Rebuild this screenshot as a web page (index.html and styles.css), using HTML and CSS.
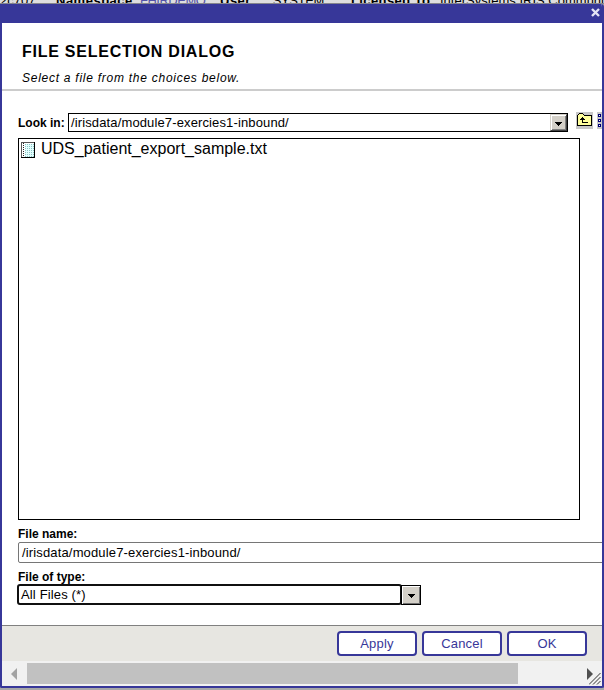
FILE: index.html
```html
<!DOCTYPE html>
<html lang="en">
<head>
<meta charset="utf-8">
<title>File Selection Dialog</title>
<link rel="stylesheet" href="styles.css">
</head>
<body>
<div class="backdrop">
  <span class="server">2c707</span><b class="ns">Namespace</b><span class="link">FHIRDEMO</span><b class="user">User</b><span class="system">_SYSTEM</span><b class="lic">Licensed To</b><span class="owner">InterSystems IRIS Community</span>
</div>
<div class="dialog">
  <div class="titlebar">
    <svg class="close" width="9" height="9" viewBox="0 0 9 9"><path d="M1 1L8 8M8 1L1 8" stroke="#e4e4f5" stroke-width="2.4"/></svg>
  </div>
  <header class="header">
    <h1>FILE SELECTION DIALOG</h1>
    <p>Select a file from the choices below.</p>
  </header>
  <main class="content">
    <div class="lookin">
      <label>Look in:</label>
      <div class="combo"><span>/irisdata/module7-exercies1-inbound/</span><div class="drop"><svg width="7" height="4" shape-rendering="crispEdges"><path d="M0 0h7v1H6v1H5v1H4v1H3V3H2V2H1V1H0z"/></svg></div></div>
      <svg class="up" width="17" height="17" shape-rendering="crispEdges">
        <path fill="#c8c8c8" d="M0 0h17v17H0z"/>
        <path fill="#000" d="M3 1h4v1h1v1h8v11H1V3h1V2h1z"/>
        <path fill="#ffff9c" d="M3 2h4v1h1v1h7v9H2V3h1z"/>
        <path fill="#000" d="M6 5h1v1h1v1h1v1H7v2h5v1H6V8H4V7h1V6h1z"/>
      </svg>
      <svg class="views" width="5" height="17" shape-rendering="crispEdges"><path fill="#c8c8c8" d="M0 0h5v17H0z"/><path fill="#000078" d="M1 2h3v3H1zM1 7h3v3H1zM1 12h3v3H1z"/><path fill="#fff" d="M2 3h1v1H2zM2 8h1v1H2zM2 13h1v1H2z"/></svg>
    </div>
    <div class="list">
      <div class="file">
        <svg width="15" height="17" shape-rendering="crispEdges">
          <defs><pattern id="dots" width="2" height="2" patternUnits="userSpaceOnUse"><path fill="#e4ffff" d="M0 0h2v2H0z"/><path fill="#8cc4c4" d="M0 0h1v1H0z"/></pattern></defs>
          <path fill="#555" d="M0 0h14v16H0z"/><path fill="#fff" d="M1 1h12v14H1z"/><path fill="url(#dots)" d="M4 2h9v13H4z"/>
          <path stroke="#222" stroke-dasharray="1 1" d="M2.5 1v14"/><path fill="#000" d="M13 0h1v16H0v-1h13z"/>
        </svg>
        <span>UDS_patient_export_sample.txt</span>
      </div>
    </div>
    <label class="name-label">File name:</label>
    <div class="name-input">/irisdata/module7-exercies1-inbound/</div>
    <label class="type-label">File of type:</label>
    <div class="type"><div class="type-input">All Files (*)</div><div class="drop type-drop"><svg width="7" height="4" shape-rendering="crispEdges"><path d="M0 0h7v1H6v1H5v1H4v1H3V3H2V2H1V1H0z"/></svg></div></div>
  </main>
  <footer class="footer">
    <button>Apply</button><button>Cancel</button><button>OK</button>
  </footer>
  <div class="scrollbar">
    <svg class="left" width="6" height="12"><path fill="#a3a3a3" d="M6 0v12L0 6z"/></svg>
    <div class="thumb"></div>
    <svg class="right" width="6" height="12"><path fill="#505050" d="M0 0v12l6-6z"/></svg>
    <svg class="grip" width="12" height="12"><path stroke="#333" d="M0 11.5L11.5 0M4 11.5L11.5 4M8 11.5L11.5 8"/></svg>
  </div>
</div>
</body>
</html>
```
FILE: styles.css
```css
* { box-sizing: border-box; }
body {
  margin: 0;
  width: 604px;
  height: 690px;
  overflow: hidden;
  background: #a8a8a8;
  font-family: "Liberation Sans", Arial, sans-serif;
  color: #000;
}
.backdrop {
  display: flex;
  height: 4px;
  overflow: hidden;
  background: #dedede;
  border-bottom: 1px solid #85858c;
  font-size: 13px;
  line-height: 14px;
  white-space: nowrap;
}
.backdrop > * { margin-top: -6px; flex: none; }
.server { width: 56px; }
.ns { width: 84px; letter-spacing: 0.5px; }
.link { width: 80px; color: #5353a8; letter-spacing: -0.5px; }
.user { width: 46px; letter-spacing: 0.5px; }
.system { width: 85px; letter-spacing: -0.4px; }
.lic { width: 89px; letter-spacing: 0.4px; }
.dialog {
  display: flex;
  flex-direction: column;
  height: 684px;
  border: 2px solid #373799;
  border-top: 0;
  border-radius: 0 3px 2px 2px;
  background: #fff;
  overflow: hidden;
}
.titlebar {
  display: flex;
  justify-content: flex-end;
  flex: none;
  height: 19px;
  padding: 4px 2px 0 0;
  background: #373799;
}
.header {
  flex: none;
  height: 68px;
  padding: 19px 20px 0;
  border-bottom: 2px solid #ccc;
}
h1 {
  margin: 0;
  font-size: 16px;
  line-height: 19px;
  letter-spacing: 0.75px;
}
.header p {
  margin: 10px 0 0;
  font-size: 12px;
  font-style: italic;
  line-height: 14px;
  letter-spacing: 0.74px;
}
.content { flex: none; height: 534px; padding: 21px 0 0 16px; }
label { display: block; font-size: 12px; font-weight: bold; line-height: 14px; }
.lookin { display: flex; height: 20px; }
.lookin label { width: 50px; padding-top: 4px; flex: none; white-space: nowrap; }
.combo {
  display: flex;
  justify-content: space-between;
  flex: none;
  width: 500px;
  height: 19px;
  margin-top: 1px;
  border: 1px solid #000;
  padding-left: 2px;
  font-size: 13px;
  line-height: 17px;
  letter-spacing: 0.13px;
}
.drop {
  display: flex;
  align-items: center;
  justify-content: center;
  width: 17px;
  height: 17px;
  padding-top: 2px;
  background: #d4d0c8;
  border: 1px solid;
  border-color: #d4d0c8 #404040 #404040 #d4d0c8;
  box-shadow: inset 1px 1px #fff, inset -1px -1px #808080;
}
.up { margin-left: 8px; flex: none; }
.views { margin-left: 4px; flex: none; }
.list {
  width: 562px;
  height: 382px;
  margin-top: 6px;
  border: 1px solid #000;
}
.file {
  display: flex;
  padding: 2px 0 0 2px;
  font-size: 16px;
  line-height: 18px;
}
.file svg { margin: 1px 5px 0 0; }
.file span { margin-top: -1px; }
.name-label { margin-top: 7px; }
.name-input {
  width: 620px;
  height: 21px;
  margin-top: 1px;
  padding-left: 3px;
  border: 1px solid #767676;
  border-radius: 2px;
  font-size: 13px;
  line-height: 19px;
  letter-spacing: 0.15px;
}
.type-label { margin-top: 7px; }
.type { display: flex; margin-left: -1px; }
.type-input {
  width: 385px;
  height: 21px;
  border: 2px solid #101010;
  border-radius: 3px;
  padding-left: 2px;
  font-size: 13px;
  line-height: 17px;
  letter-spacing: 0.15px;
}
.type-drop {
  width: 20px;
  height: 20px;
  margin: 1px 0 0 -1px;
  border-color: #000;
  box-shadow: inset 1px 1px #fff, inset -1px -1px #707070;
}
.footer {
  display: flex;
  justify-content: flex-end;
  gap: 5px;
  flex: none;
  height: 36px;
  padding: 5px 15px 0 0;
  border-top: 1px solid #808080;
  background: #e7e6e1;
}
button {
  width: 80px;
  height: 25px;
  padding: 0;
  border: 2px solid #373799;
  border-radius: 4px;
  background: #fff;
  color: #373799;
  font: 13px "Liberation Sans", Arial, sans-serif;
  letter-spacing: 0.2px;
}
.scrollbar {
  position: relative;
  display: flex;
  align-items: center;
  flex: none;
  height: 25px;
  background: #f1f1f1;
}
.left { margin-left: 9px; }
.thumb {
  width: 491px;
  height: 21px;
  margin-left: 10px;
  background: #c1c1c1;
}
.right { margin-left: 69px; }
.grip { position: absolute; right: 1px; bottom: 1px; }
```
